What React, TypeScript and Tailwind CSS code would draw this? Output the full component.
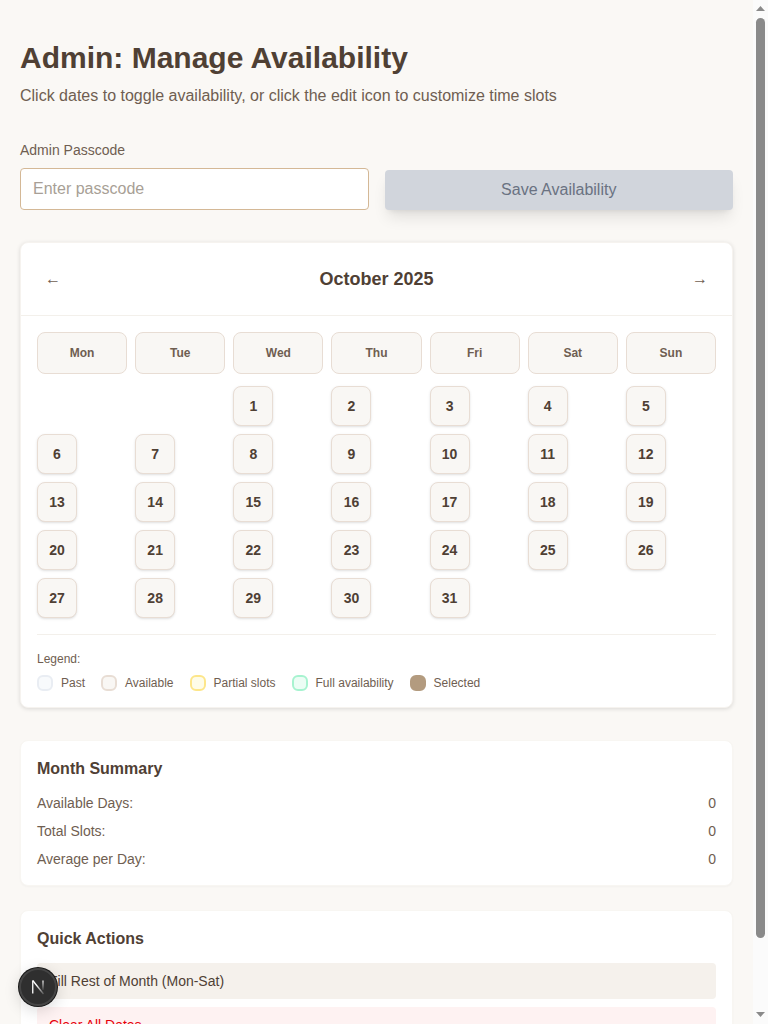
const days = ["Mon", "Tue", "Wed", "Thu", "Fri", "Sat", "Sun"];
const cells: (number | null)[] = [null, null, ...Array.from({ length: 31 }, (_, i) => i + 1)];

const legend = [
  { label: "Past", cls: "bg-[#f8fafc] border-[#e9edf3]" },
  { label: "Available", cls: "bg-[#f9f7f4] border-[#e8ddd4]" },
  { label: "Partial slots", cls: "bg-[#fefce8] border-[#fde68a]" },
  { label: "Full availability", cls: "bg-[#ecfdf5] border-[#a7f3d0]" },
  { label: "Selected", cls: "bg-[#b39b7f] border-[#b39b7f]" },
];

const summary = [
  ["Available Days:", "0"],
  ["Total Slots:", "0"],
  ["Average per Day:", "0"],
];

export default function App() {
  return (
    <div className="flex h-screen overflow-hidden bg-[#faf8f5] font-['Liberation_Sans',Arial,sans-serif] text-[#4f4034]">
      <div className="flex-1 min-w-0 px-5 pt-10">
        <h1 className="text-3xl font-bold leading-9 mb-2">Admin: Manage Availability</h1>
        <p className="text-base leading-6 text-[#6f5e51] mb-8">
          Click dates to toggle availability, or click the edit icon to customize time slots
        </p>

        <div className="flex items-end gap-4 mb-8">
          <div className="flex-1">
            <label className="block text-sm leading-5 text-[#6f5e51] mb-2">Admin Passcode</label>
            <input
              type="password"
              placeholder="Enter passcode"
              className="w-full h-[42px] px-3 bg-white border border-[#d4b896] rounded text-base outline-none placeholder:text-[#a89f96]"
            />
          </div>
          <button className="flex-1 h-10 rounded bg-[#d1d5dc] text-[#6a7282] text-base shadow-lg">
            Save Availability
          </button>
        </div>

        <div className="bg-white rounded-lg border border-[#f6f3ef] shadow-[0_1px_4px_rgba(0,0,0,0.13)] mb-8">
          <div className="flex items-center justify-between h-[73px] px-6 border-b border-[#f3f0eb]">
            <button className="text-base leading-6 text-[#6f5e51]">←</button>
            <h2 className="text-lg font-bold">October 2025</h2>
            <button className="text-base leading-6 text-[#6f5e51]">→</button>
          </div>
          <div className="p-4">
            <div className="grid grid-cols-7 gap-2 mb-3">
              {days.map((d) => (
                <div
                  key={d}
                  className="h-[42px] flex items-center justify-center rounded-lg bg-[#f9f7f4] border border-[#e8ddd4] text-xs font-bold text-[#6f5e51]"
                >
                  {d}
                </div>
              ))}
            </div>
            <div className="grid grid-cols-7 gap-2">
              {cells.map((n, i) => (
                <div key={i} className="h-10">
                  {n !== null && (
                    <button className="w-10 h-10 flex items-center justify-center rounded-lg bg-[#f9f7f4] border border-[#e8ddd4] text-sm font-bold text-[#4f4034] shadow-sm">
                      {n}
                    </button>
                  )}
                </div>
              ))}
            </div>
            <div className="mt-4 pt-4 border-t border-[#f3f0eb]">
              <div className="text-xs leading-4 text-[#6f5e51] mb-2">Legend:</div>
              <div className="flex items-center gap-4">
                {legend.map((l) => (
                  <div key={l.label} className="flex items-center gap-2">
                    <span className={`w-4 h-4 rounded-md border-2 ${l.cls}`} />
                    <span className="text-xs leading-4 text-[#6f5e51]">{l.label}</span>
                  </div>
                ))}
              </div>
            </div>
          </div>
        </div>

        <div className="bg-white rounded-lg border border-[#f8f6f2] shadow-[0_1px_2px_rgba(0,0,0,0.03)] p-4 mb-6">
          <h3 className="text-base font-bold leading-6 mb-3">Month Summary</h3>
          <div className="flex flex-col gap-2">
            {summary.map(([k, v]) => (
              <div key={k} className="flex justify-between text-sm leading-5 text-[#6f5e51]">
                <span>{k}</span>
                <span>{v}</span>
              </div>
            ))}
          </div>
        </div>

        <div className="bg-white rounded-lg border border-[#f8f6f2] shadow-[0_1px_2px_rgba(0,0,0,0.03)] p-4">
          <h3 className="text-base font-bold leading-6 mb-3">Quick Actions</h3>
          <div className="flex flex-col gap-2">
            <button className="h-9 px-3 rounded text-left text-sm bg-[#f5f1ec] text-[#4f4034]">
              Fill Rest of Month (Mon-Sat)
            </button>
            <button className="h-9 px-3 rounded text-left text-sm bg-[#fef2f2] text-[#e7000b]">
              Clear All Dates
            </button>
          </div>
        </div>
      </div>

      <div className="w-[15px] shrink-0 h-full bg-[#fbfbfb] flex flex-col items-center">
        <svg width="9" height="5" viewBox="0 0 9 5" className="mt-[6px] mb-[7px] shrink-0">
          <path d="M4.5 0L9 5H0Z" fill="#8a8a8a" />
        </svg>
        <div className="w-[9px] h-[920px] shrink-0 rounded-full bg-[#8a8a8a]" />
        <svg width="9" height="5" viewBox="0 0 9 5" className="mt-[74px] shrink-0">
          <path d="M0 0H9L4.5 5Z" fill="#8a8a8a" />
        </svg>
      </div>

      <div className="fixed left-[19px] bottom-[18px] w-[38px] h-[38px] rounded-full bg-[#2f2f2f] border-2 border-[#454545] shadow-[0_0_0_1px_#171717,0_4px_16px_rgba(0,0,0,0.16)] flex items-center justify-center">
        <svg width="16" height="16" viewBox="0 0 16 16" fill="none">
          <defs>
            <linearGradient id="nd" x1="4" y1="2" x2="14" y2="15" gradientUnits="userSpaceOnUse">
              <stop offset="0.3" stopColor="white" />
              <stop offset="1" stopColor="white" stopOpacity="0.15" />
            </linearGradient>
            <linearGradient id="ns" x1="13" y1="2" x2="13" y2="11" gradientUnits="userSpaceOnUse">
              <stop stopColor="white" />
              <stop offset="1" stopColor="white" stopOpacity="0.1" />
            </linearGradient>
          </defs>
          <path d="M2.75 14.5V1.5" stroke="white" strokeWidth="1.3" />
          <path d="M2.75 1.5L13.5 15" stroke="url(#nd)" strokeWidth="1.3" />
          <path d="M13 1.5V11" stroke="url(#ns)" strokeWidth="1.2" />
        </svg>
      </div>
    </div>
  );
}
